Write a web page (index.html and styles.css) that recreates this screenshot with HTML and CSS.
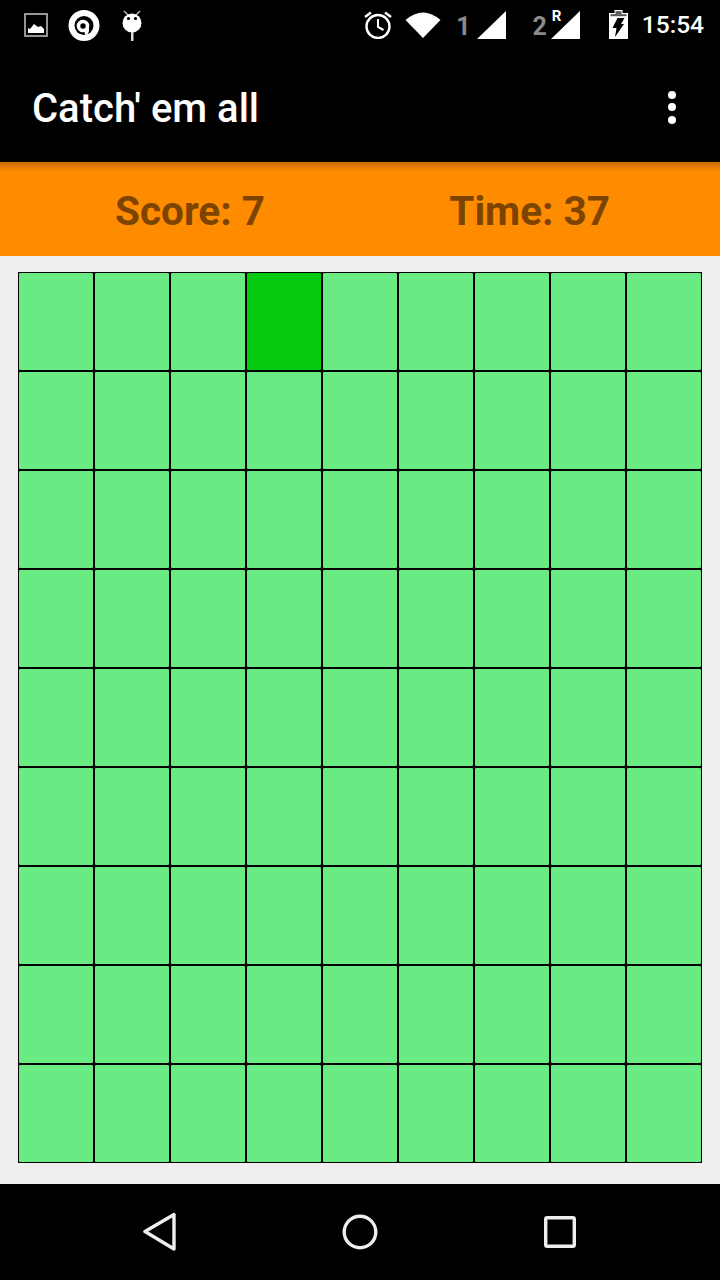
FILE: index.html
```html
<!DOCTYPE html>
<html lang="en">
<head>
    <meta charset="UTF-8">
    <title>Catch' em all</title>
    <link rel="stylesheet" href="styles.css">
</head>
<body>
    <div class="status-bar">
        <div class="status-left">
            <svg class="icon-picture" width="24" height="24" viewBox="0 0 24 24">
                <rect x="1" y="1" width="22" height="22" fill="none" stroke="#bbb" stroke-width="1.6"/>
                <path d="M4 20V15L6 16L10 11L14 14L17 13L20 16V20Z" fill="#fff"/>
            </svg>
            <svg class="icon-at" width="32" height="32" viewBox="0 0 32 32">
                <circle cx="16" cy="15.500" r="15.500" fill="#fff"/>
                <circle cx="16" cy="15.500" r="9.500" fill="#000"/>
                <circle cx="15" cy="16" r="4.500" fill="none" stroke="#fff" stroke-width="3.600"/>
                <path d="M19.500 16V20Q19.500 23 17 24" fill="none" stroke="#fff" stroke-width="3"/>
            </svg>
            <svg class="icon-droid" width="22" height="32" viewBox="0 0 22 32">
                <path d="M2 1L6 5M18 1L14 5" stroke="#bbb" stroke-width="1.500"/>
                <circle cx="10" cy="13" r="9.500" fill="#fff"/>
                <rect x="9" y="22" width="2.500" height="9" fill="#ddd"/>
                <circle cx="6.500" cy="8.500" r="1.600" fill="#000"/>
                <circle cx="13.500" cy="8.500" r="1.600" fill="#000"/>
            </svg>
        </div>
        <div class="status-right">
            <svg class="icon-alarm" width="28" height="28" viewBox="0 0 28 28">
                <circle cx="14" cy="15.500" r="11.500" fill="none" stroke="#fff" stroke-width="2.400"/>
                <path d="M14 8V16L19.500 19" fill="none" stroke="#fff" stroke-width="2"/>
                <path d="M1 6L7 1.500M27 6L21 1.500" stroke="#fff" stroke-width="2.400"/>
            </svg>
            <svg class="icon-wifi" width="36" height="28" viewBox="0 0 36 28">
                <path d="M0.500 9Q18 -6 35.500 9L18 27Z" fill="#fff"/>
            </svg>
            <span class="sim-num sim-one">1</span>
            <svg class="icon-signal" width="29" height="28" viewBox="0 0 29 28">
                <path d="M0 28L29 0V28Z" fill="#fff"/>
            </svg>
            <span class="sim-num sim-two">2</span>
            <div class="sim-signal">
                <span class="roaming">R</span>
                <svg class="icon-signal" width="29" height="28" viewBox="0 0 29 28">
                    <path d="M0 28L29 0V28Z" fill="#fff"/>
                </svg>
            </div>
            <svg class="icon-battery" width="19" height="29" viewBox="0 0 19 29">
                <path d="M5.500 0H13.500V3H19V29H0V3H5.500Z" fill="#fff"/>
                <rect x="6.500" y="1.200" width="6" height="3" fill="#555"/>
                <rect x="1.500" y="4.200" width="16" height="2" fill="#555"/>
                <path d="M8.500 8H15.500L12 14H15L6 27L7.500 18H3.500Z" fill="#000"/>
            </svg>
            <span class="clock">15:54</span>
        </div>
    </div>

    <header class="app-bar">
        <h1 class="app-title">Catch' em all</h1>
        <div class="overflow-menu">
            <span class="dot"></span>
            <span class="dot"></span>
            <span class="dot"></span>
        </div>
    </header>

    <div class="score-bar">
        <span class="score-item">Score: 7</span>
        <span class="score-item">Time: 37</span>
    </div>

    <main class="board-area">
        <div class="board">
            <div class="cell"></div><div class="cell"></div><div class="cell"></div><div class="cell active"></div><div class="cell"></div><div class="cell"></div><div class="cell"></div><div class="cell"></div><div class="cell"></div>
            <div class="cell"></div><div class="cell"></div><div class="cell"></div><div class="cell"></div><div class="cell"></div><div class="cell"></div><div class="cell"></div><div class="cell"></div><div class="cell"></div>
            <div class="cell"></div><div class="cell"></div><div class="cell"></div><div class="cell"></div><div class="cell"></div><div class="cell"></div><div class="cell"></div><div class="cell"></div><div class="cell"></div>
            <div class="cell"></div><div class="cell"></div><div class="cell"></div><div class="cell"></div><div class="cell"></div><div class="cell"></div><div class="cell"></div><div class="cell"></div><div class="cell"></div>
            <div class="cell"></div><div class="cell"></div><div class="cell"></div><div class="cell"></div><div class="cell"></div><div class="cell"></div><div class="cell"></div><div class="cell"></div><div class="cell"></div>
            <div class="cell"></div><div class="cell"></div><div class="cell"></div><div class="cell"></div><div class="cell"></div><div class="cell"></div><div class="cell"></div><div class="cell"></div><div class="cell"></div>
            <div class="cell"></div><div class="cell"></div><div class="cell"></div><div class="cell"></div><div class="cell"></div><div class="cell"></div><div class="cell"></div><div class="cell"></div><div class="cell"></div>
            <div class="cell"></div><div class="cell"></div><div class="cell"></div><div class="cell"></div><div class="cell"></div><div class="cell"></div><div class="cell"></div><div class="cell"></div><div class="cell"></div>
            <div class="cell"></div><div class="cell"></div><div class="cell"></div><div class="cell"></div><div class="cell"></div><div class="cell"></div><div class="cell"></div><div class="cell"></div><div class="cell"></div>
        </div>
    </main>

    <nav class="nav-bar">
        <svg width="33" height="40" viewBox="0 0 33 40">
            <path d="M2 19.500L31 2.500V37Z" fill="none" stroke="#eee" stroke-width="3.400" stroke-linejoin="round"/>
        </svg>
        <svg width="36" height="36" viewBox="0 0 36 36">
            <circle cx="18" cy="18" r="15.800" fill="none" stroke="#eee" stroke-width="3.400"/>
        </svg>
        <svg width="32" height="32" viewBox="0 0 32 32">
            <rect x="1.700" y="1.700" width="28.600" height="28.600" rx="1.500" fill="none" stroke="#eee" stroke-width="3.400"/>
        </svg>
    </nav>
</body>
</html>
```

FILE: styles.css
```css
* {
    box-sizing: border-box;
}
body {
    margin: 0;
    width: 720px;
    height: 1280px;
    display: flex;
    flex-direction: column;
    font-family: Roboto, sans-serif;
    background-color: #000;
    overflow: hidden;
}
svg {
    display: block;
    flex: none;
}

/* status bar */
.status-bar {
    height: 48px;
    display: flex;
    justify-content: space-between;
    padding: 0 16px 0 24px;
    color: #fff;
}
.status-left,
.status-right {
    display: flex;
    align-items: flex-start;
}
.icon-picture {
    margin-top: 13px;
}
.icon-at {
    margin: 10px 0 0 20px;
}
.icon-droid {
    margin: 10px 0 0 22px;
}
.icon-alarm {
    margin-top: 11px;
}
.icon-wifi {
    margin: 11px 0 0 13px;
}
.icon-signal {
    margin-top: 11px;
}
.sim-num {
    font-size: 25px;
    line-height: 26px;
    font-weight: 700;
    color: #8a8a8a;
}
.sim-one {
    margin: 14px 7px 0 15px;
}
.sim-two {
    margin: 14px 4px 0 26px;
}
.sim-signal {
    position: relative;
}
.roaming {
    position: absolute;
    left: 1px;
    top: 8px;
    font-size: 15px;
    line-height: 16px;
    font-weight: 700;
}
.icon-battery {
    margin: 10px 0 0 29px;
}
.clock {
    margin: 11px 0 0 14px;
    font-size: 24.500px;
    line-height: 28px;
    font-weight: 500;
}

/* action bar */
.app-bar {
    height: 114px;
    display: flex;
    justify-content: space-between;
    align-items: center;
    padding: 6px 44px 0 32px;
    background-color: #000;
}
.app-title {
    margin: 0;
    font-size: 40px;
    font-weight: 500;
    color: #fff;
}
.overflow-menu {
    display: flex;
    flex-direction: column;
    gap: 4.500px;
    margin-top: -2px;
}
.dot {
    width: 8px;
    height: 8px;
    border-radius: 50%;
    background-color: #fff;
}

/* score */
.score-bar {
    height: 94px;
    display: flex;
    align-items: center;
    padding: 3px 110px 0 115px;
    justify-content: space-between;
    background: linear-gradient(#c96f00, #ff8c00 10px);
}
.score-item {
    font-size: 40.500px;
    font-weight: 700;
    color: #7c4400;
}

/* board */
.board-area {
    height: 928px;
    padding: 16px 18px 0;
    background-color: #eeeeee;
}
.board {
    display: grid;
    grid-template-columns: repeat(9, 76px);
    grid-template-rows: repeat(9, 99px);
    background-color: #000;
}
.cell {
    border: 1px solid #000;
    border-radius: 2px;
    background-color: #6aea82;
}
.cell.active {
    background-color: #03c90f;
}

/* nav bar */
.nav-bar {
    height: 96px;
    display: flex;
    align-items: center;
    padding: 0 144px 0 143px;
    justify-content: space-between;
    background-color: #000;
}
```
